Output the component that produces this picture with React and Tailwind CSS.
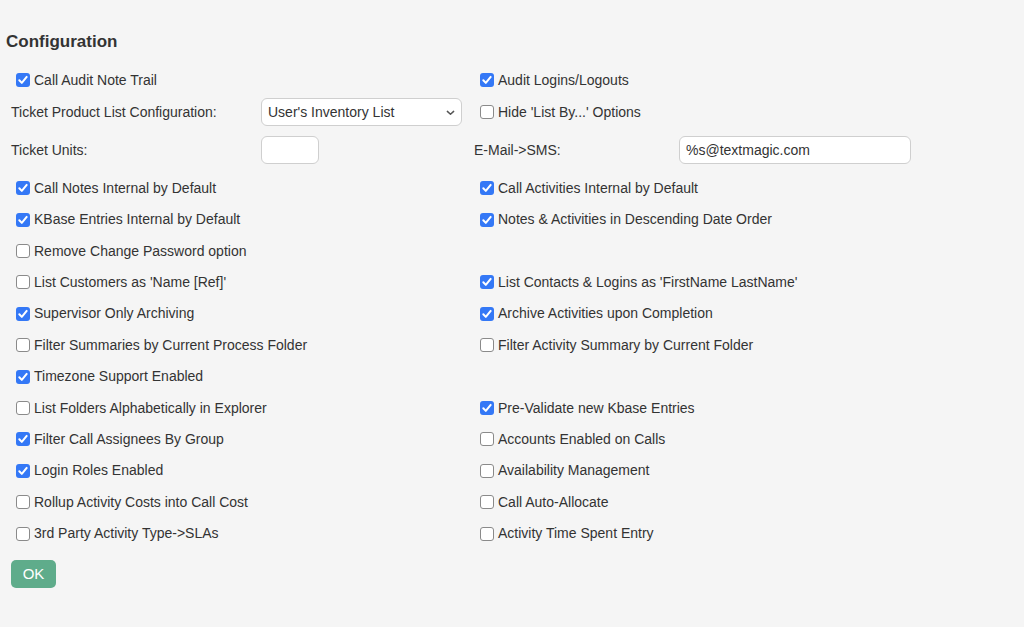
import React from 'react';

let Check = ({ checked }) => (
  <span
    className={`flex justify-center items-center w-[14px] h-[14px] rounded-[3px] mr-[4px] shrink-0 ${
      checked ? 'bg-[#3478f6]' : 'bg-white border border-[#8a8a8a]'
    }`}
  >
    {checked && (
      <svg viewBox="0 0 14 14" className="w-[14px] h-[14px]" fill="none">
        <path d="M3.3 7.3l2.5 2.6 4.9-6" stroke="white" strokeWidth={2} strokeLinecap="round" strokeLinejoin="round" />
      </svg>
    )}
  </span>
);

let Box = ({ label, checked }) => (
  <label className="flex items-center pl-[5px]">
    <Check checked={checked} />
    <span>{label}</span>
  </label>
);

let rows = [
  [['Call Notes Internal by Default', true], ['Call Activities Internal by Default', true]],
  [['KBase Entries Internal by Default', true], ['Notes & Activities in Descending Date Order', true]],
  [['Remove Change Password option', false], null],
  [["List Customers as 'Name [Ref]'", false], ["List Contacts & Logins as 'FirstName LastName'", true]],
  [['Supervisor Only Archiving', true], ['Archive Activities upon Completion', true]],
  [['Filter Summaries by Current Process Folder', false], ['Filter Activity Summary by Current Folder', false]],
  [['Timezone Support Enabled', true], null],
  [['List Folders Alphabetically in Explorer', false], ['Pre-Validate new Kbase Entries', true]],
  [['Filter Call Assignees By Group', true], ['Accounts Enabled on Calls', false]],
  [['Login Roles Enabled', true], ['Availability Management', false]],
  [['Rollup Activity Costs into Call Cost', false], ['Call Auto-Allocate', false]],
  [['3rd Party Activity Type->SLAs', false], ['Activity Time Spent Entry', false]],
];

let App = () => {
  return (
    <div className="w-full min-h-[627px] bg-[#f5f5f5] text-[#333] text-[14px] font-['Liberation_Sans',Arial,sans-serif]">
      <div className="pt-[31px] pl-[6px]">
        <h1 className="text-[17px] font-bold h-[22px] leading-[22px] text-[#333]">Configuration</h1>
      </div>

      <div className="flex flex-col pl-[11px] mt-[11px]">
        <div className="flex items-center h-[32px]">
          <div className="w-[464px]">
            <Box label="Call Audit Note Trail" checked />
          </div>
          <div>
            <Box label="Audit Logins/Logouts" checked />
          </div>
        </div>

        <div className="flex items-center h-[32px]">
          <div className="w-[250px]">Ticket Product List Configuration:</div>
          <div className="w-[214px]">
            <div className="relative w-[201px] h-[28px] bg-white border border-[#cfcfcf] rounded-[6px] flex items-center pl-[6px]">
              <span>User's Inventory List</span>
              <svg viewBox="0 0 10 6" className="absolute right-[6px] top-[11px] w-[9px] h-[6px]" fill="none">
                <path d="M1.5 1.2l3.5 3.3 3.5-3.3" stroke="#555" strokeWidth={1.6} strokeLinecap="round" strokeLinejoin="round" />
              </svg>
            </div>
          </div>
          <div>
            <Box label="Hide 'List By...' Options" />
          </div>
        </div>

        <div className="flex items-center h-[44px]">
          <div className="w-[250px]">Ticket Units:</div>
          <div className="w-[213px]">
            <div className="w-[58px] h-[28px] bg-white border border-[#cfcfcf] rounded-[6px]" />
          </div>
          <div className="w-[205px]">E-Mail-&gt;SMS:</div>
          <div className="w-[232px] h-[28px] bg-white border border-[#cfcfcf] rounded-[6px] flex items-center pl-[6px]">
            %s@textmagic.com
          </div>
        </div>

        {rows.map((row, i) => (
          <div key={i} className={`flex items-center ${i === 0 ? 'h-[32px]' : 'h-[31.4px]'}`}>
            <div className="w-[464px]">{row[0] && <Box label={row[0][0]} checked={row[0][1]} />}</div>
            <div>{row[1] && <Box label={row[1][0]} checked={row[1][1]} />}</div>
          </div>
        ))}

        <div className="pt-[11px]">
          <button className="w-[45px] h-[28px] rounded-[5px] bg-[#5fac8b] text-white text-[15px]">OK</button>
        </div>
      </div>
    </div>
  );
};

export default App;
